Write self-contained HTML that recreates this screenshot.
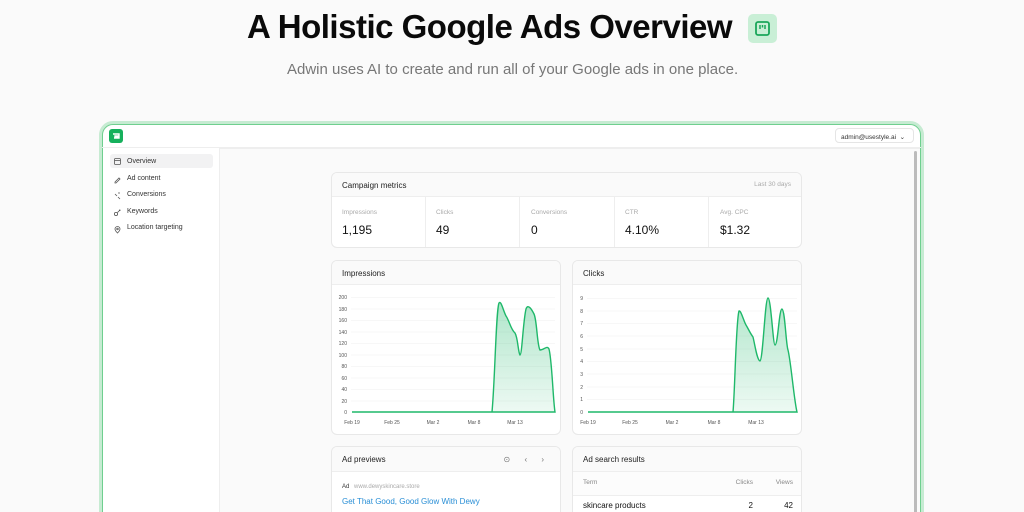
<!DOCTYPE html>
<html><head><meta charset="utf-8"><style>
*{margin:0;padding:0;box-sizing:border-box}
html,body{width:1024px;height:512px;overflow:hidden;background:#fafafa}
body{font-family:"Liberation Sans",sans-serif;color:#111}
#w{position:relative;width:1024px;height:512px;overflow:hidden;clip-path:inset(0)}
.a{position:absolute}
h1{position:absolute;left:247px;top:8px;font-size:33px;font-weight:700;letter-spacing:-0.5px;color:#0a0a0a;white-space:nowrap}
.sub{left:287px;top:61px;font-size:15px;color:#777;white-space:nowrap}
.frame{left:99px;top:121px;width:825px;height:460px;border:4px solid #c6ebd2;border-radius:14px;background:#fff}
.frame2{left:102px;top:124px;width:819px;height:460px;border:1px solid #6fcf8f;border-radius:11px;background:#fff}
.main{left:219px;top:148px;width:701px;height:400px;background:#fafafa;border-left:1px solid #eee;border-top:1px solid #eee}
.card{background:#fff;border:1px solid #e8e8e8;border-radius:6px;position:absolute;overflow:hidden}
.ch{height:24px;border-bottom:1px solid #eee;background:#fafafa;font-size:8px;padding:8px 10px;color:#222}
.nav{font-size:7px;color:#333;left:110px;width:103px;height:14px;padding:4px 0 0 17px}
.ml{font-size:6.5px;color:#aaa;position:absolute;top:36px}
.mv{font-size:12px;color:#111;position:absolute;top:50px}
.ax{font-size:5px;fill:#555;font-family:"Liberation Sans",sans-serif}
</style></head><body><div id="w">
<h1>A Holistic Google Ads Overview</h1>
<div class="a" style="left:748px;top:14px;width:29px;height:29px;background:#c9efd6;border-radius:5px">
<svg width="29" height="29"><rect x="8" y="8" width="13" height="13" rx="2" fill="none" stroke="#1aa65a" stroke-width="1.8"/><path d="M12 11v4M14.5 11v2.5M17 11v4" stroke="#1aa65a" stroke-width="1.5"/></svg></div>
<div class="a sub">Adwin uses AI to create and run all of your Google ads in one place.</div>
<div class="a frame"></div><div class="a frame2"></div>
<div class="a" style="left:109px;top:129px;width:14px;height:14px;background:#16b05c;border-radius:3px"><svg width="14" height="14"><path d="M4 5h6v2H6v1h4v1H5" stroke="#fff" stroke-width="1.4" fill="none"/></svg></div>
<div class="a" style="left:835px;top:128px;width:79px;height:15px;border:1px solid #e5e5e5;border-radius:4px;font-size:6.5px;padding:4px 0 0 5px;color:#333">admin@usestyle.ai &nbsp;⌄</div>
<div class="a" style="left:102px;top:147px;width:819px;height:1px;background:#eee"></div>
<div class="a nav" style="top:154px;background:#f2f2f3;border-radius:3px">Overview</div>
<div class="a nav" style="top:171px">Ad content</div>
<div class="a nav" style="top:187px">Conversions</div>
<div class="a nav" style="top:204px">Keywords</div>
<div class="a nav" style="top:220px">Location targeting</div>
<svg class="a" style="left:112px;top:155px" width="12" height="80" fill="none" stroke="#555" stroke-width="0.8">
<rect x="2.5" y="3.5" width="6" height="6" rx="1"/><path d="M2.5 5.5h6"/>
<path d="M3 27l4-4 1 1-4 4H3z"/>
<path d="M3 39l2 2M6 42l2 2M6 38h2"/>
<circle cx="4" cy="59" r="1.6"/><path d="M5.5 57.5l2.5-2.5M7 55h1v1"/>
<path d="M5.5 78c2-2 2.5-3 2.5-4a2.5 2.5 0 0 0-5 0c0 1 .5 2 2.5 4z"/><circle cx="5.5" cy="74" r=".8"/>
</svg>
<div class="a main"></div>
<div class="a" style="left:914px;top:151px;width:3px;height:380px;background:#bbb;border-radius:2px"></div>

<div class="card" style="left:331px;top:172px;width:471px;height:76px">
<div class="ch" style="padding-top:8px">Campaign metrics<span style="float:right;color:#aaa;font-size:6.5px">Last 30 days</span></div>
<div class="a" style="left:93px;top:24px;width:1px;height:52px;background:#eee"></div>
<div class="a" style="left:187px;top:24px;width:1px;height:52px;background:#eee"></div>
<div class="a" style="left:282px;top:24px;width:1px;height:52px;background:#eee"></div>
<div class="a" style="left:376px;top:24px;width:1px;height:52px;background:#eee"></div>
<div class="ml" style="left:10px">Impressions</div><div class="mv" style="left:10px">1,195</div>
<div class="ml" style="left:104px">Clicks</div><div class="mv" style="left:104px">49</div>
<div class="ml" style="left:199px">Conversions</div><div class="mv" style="left:199px">0</div>
<div class="ml" style="left:293px">CTR</div><div class="mv" style="left:293px">4.10%</div>
<div class="ml" style="left:388px">Avg. CPC</div><div class="mv" style="left:388px">$1.32</div>
</div>

<div class="card" style="left:331px;top:260px;width:230px;height:175px"><div class="ch">Impressions</div></div>
<div class="card" style="left:572px;top:260px;width:230px;height:175px"><div class="ch">Clicks</div></div>
<svg class="a" style="left:0;top:0" width="1024" height="512">
<defs><linearGradient id="g" x1="0" y1="0" x2="0" y2="1"><stop offset="0" stop-color="#1fb86a" stop-opacity=".35"/><stop offset="1" stop-color="#1fb86a" stop-opacity=".08"/></linearGradient></defs>
<g stroke="#efefef" stroke-width="0.6">
<path d="M351 297.5h204M351 309h204M351 320.5h204M351 332h204M351 343.5h204M351 355h204M351 366.5h204M351 378h204M351 389.5h204M351 401h204"/>
<path d="M587 298.5h210M587 311h210M587 323.5h210M587 336h210M587 349h210M587 361.5h210M587 374h210M587 387h210M587 399.5h210"/>
</g>
<g class="ax" text-anchor="end">
<text x="347" y="299">200</text><text x="347" y="311">180</text><text x="347" y="322">160</text><text x="347" y="334">140</text><text x="347" y="345">120</text><text x="347" y="357">100</text><text x="347" y="368">80</text><text x="347" y="380">60</text><text x="347" y="391">40</text><text x="347" y="403">20</text><text x="347" y="414">0</text>
<text x="583" y="300">9</text><text x="583" y="313">8</text><text x="583" y="325">7</text><text x="583" y="338">6</text><text x="583" y="351">5</text><text x="583" y="363">4</text><text x="583" y="376">3</text><text x="583" y="389">2</text><text x="583" y="401">1</text><text x="583" y="414">0</text>
</g>
<g class="ax" text-anchor="middle">
<text x="352" y="424">Feb 19</text><text x="392" y="424">Feb 25</text><text x="433" y="424">Mar 2</text><text x="474" y="424">Mar 8</text><text x="515" y="424">Mar 13</text>
<text x="588" y="424">Feb 19</text><text x="630" y="424">Feb 25</text><text x="672" y="424">Mar 2</text><text x="714" y="424">Mar 8</text><text x="756" y="424">Mar 13</text>
</g>
<path d="M352 412H492C495 380 496 310 499 303C501 300 503 310 506 316C509 320 511 330 515 333C518 338 518 352 520 355C522 355 523 322 526 309C528 303 532 310 534 314C537 320 537 345 540 350C544 350 547 345 549 349C552 360 553 400 555 412Z" fill="url(#g)" stroke="#1fb86a" stroke-width="1.4"/>
<path d="M588 412H733C735 390 736 320 739 311C741 310 744 322 746 325C749 330 750 333 753 337C755 345 757 360 760 361C763 360 765 298 768 298C771 298 773 345 775 345C778 345 779 309 782 309C785 310 786 345 788 350C791 362 794 400 797 412Z" fill="url(#g)" stroke="#1fb86a" stroke-width="1.4"/>
</svg>

<div class="card" style="left:331px;top:446px;width:230px;height:120px"><div class="ch" style="height:25px">Ad previews<span style="float:right;color:#777;letter-spacing:6px">⊙ ‹ ›</span></div>
<div class="a" style="left:10px;top:37px;font-size:6px;color:#333">Ad <span style="color:#aaa;margin-left:3px">www.dewyskincare.store</span></div>
<div class="a" style="left:10px;top:50px;font-size:8px;color:#2a8fd6">Get That Good, Good Glow With Dewy</div></div>
<div class="card" style="left:572px;top:446px;width:230px;height:120px"><div class="ch" style="height:25px">Ad search results</div>
<div class="a" style="left:0;top:25px;width:230px;height:24px;border-bottom:1px solid #eee;background:#fcfcfc;font-size:6.5px;color:#888;padding:7px 10px">Term<span style="position:absolute;right:50px">Clicks</span><span style="position:absolute;right:10px">Views</span></div>
<div class="a" style="left:0;top:49px;width:230px;height:20px;font-size:8px;color:#111;padding:5px 10px">skincare products<span style="position:absolute;right:50px">2</span><span style="position:absolute;right:10px">42</span></div></div>
</div></body></html>
